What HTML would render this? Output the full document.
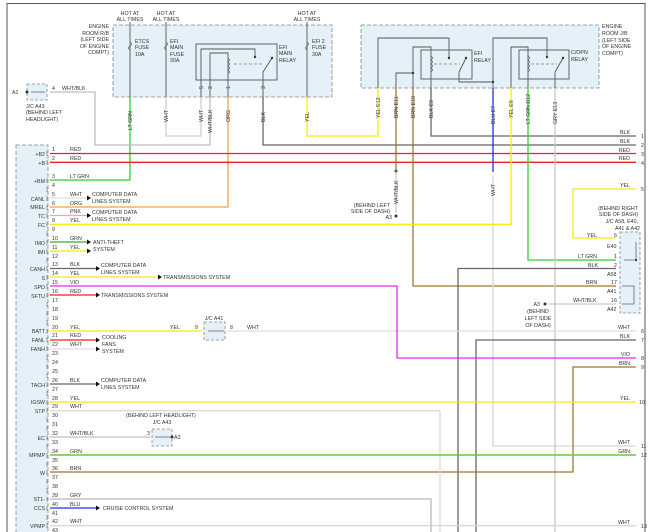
<!DOCTYPE html>
<html><head><meta charset="utf-8"><style>
html,body{margin:0;padding:0;background:#fff}
svg{display:block}
text{font-family:"Liberation Sans",sans-serif;font-size:5.3px;fill:#333}
.w{fill:none;stroke-width:1.3}
</style></head><body>
<svg width="650" height="532" viewBox="0 0 650 532" xmlns="http://www.w3.org/2000/svg">
<rect x="0" y="0" width="650" height="532" fill="#fff"/>
<path d="M7 532 V3.5 H645 V532" fill="none" stroke="#555" stroke-width="1"/>
<rect x="113" y="25" width="219" height="72" fill="#e4f1f8" stroke="#888" stroke-width="0.8" stroke-dasharray="4,2"/>
<rect x="361" y="25" width="238" height="63" fill="#e4f1f8" stroke="#888" stroke-width="0.8" stroke-dasharray="4,2"/>
<rect x="16" y="145" width="32" height="390" fill="#e4f1f8" stroke="#888" stroke-width="0.8" stroke-dasharray="4,2"/>
<rect x="27" y="84" width="20" height="16" fill="#e4f1f8" stroke="#888" stroke-width="0.8" stroke-dasharray="3,2"/>
<rect x="620" y="232" width="20" height="81" fill="#e4f1f8" stroke="#888" stroke-width="0.8" stroke-dasharray="3,2"/>
<rect x="204" y="322" width="21" height="18" fill="#e4f1f8" stroke="#888" stroke-width="0.8" stroke-dasharray="3,2"/>
<rect x="152" y="429" width="20" height="17" fill="#e4f1f8" stroke="#888" stroke-width="0.8" stroke-dasharray="3,2"/>

<g fill="none" stroke="#555" stroke-width="0.9">
<path d="M130 22 V97 M166 22 V97 M307 22 V97"/>
<rect x="196" y="44" width="81" height="36"/>
<path d="M201 97 V49 H255 V57 M210 97 V53 H228 V97"/>
<path d="M263 97 V72 L272 58"/>
<path d="M234 64 H262" stroke="#999" stroke-dasharray="3,2"/>
<path d="M378 88 V38 H449 V58 M396 88 V73 H413 M413 88 V47 H431 V88 M459 72 V82 H493"/>
<rect x="421" y="50" width="51" height="29"/>
<path d="M434 64 H460" stroke="#999" stroke-dasharray="3,2"/>
<path d="M459 72 L466 58"/>
<path d="M493 88 V38 H547 V57 M511 88 V47 H528 V88 M555 88 V72 L563 58"/>
<rect x="519" y="50" width="50" height="29"/>
<path d="M531 64 H557" stroke="#999" stroke-dasharray="3,2"/>
</g>
<g fill="#333"><circle cx="255" cy="57" r="1.2"/><circle cx="272" cy="58" r="1.2"/><circle cx="413" cy="73" r="1.2"/><circle cx="493" cy="82" r="1.2"/><circle cx="449" cy="58" r="1.2"/><circle cx="466" cy="58" r="1.2"/><circle cx="547" cy="57" r="1.2"/><circle cx="563" cy="58" r="1.2"/><circle cx="396" cy="171" r="1.5"/><circle cx="396" cy="216" r="1.5"/><circle cx="545" cy="304" r="1.5"/><circle cx="27" cy="92" r="1.5"/><circle cx="172" cy="437" r="1.5"/><circle cx="636" cy="260" r="1.2"/></g>
<g fill="none" stroke="#555" stroke-width="0.7">
<path d="M228 58 q3 2 0 4 q3 2 0 4 q3 2 0 4 q3 2 0 4"/>
<path d="M431 56 q3 2 0 4 q3 2 0 4 q3 2 0 4 q3 2 0 4"/>
<path d="M528 56 q3 2 0 4 q3 2 0 4 q3 2 0 4 q3 2 0 4"/>
<path d="M130 42 q3 2 0 4 q-3 2 0 4 M166 42 q3 2 0 4 q-3 2 0 4 M307 42 q3 2 0 4 q-3 2 0 4"/>
</g>

<g class="w">
<path d="M130 97 V180 H50" stroke="#2ad42a"/>
<path d="M166 97 V136 H201 V97" stroke="#cfcfcf"/>
<path d="M210 97 V145 H95 V92 H50" stroke="#bdbdbd"/>
<path d="M228 97 V207 H50" stroke="#f5a040"/>
<path d="M263 97 V145 H636" stroke="#666"/>
<path d="M307 97 V136 H378 V88" stroke="#f2ea10"/>
<path d="M431 88 V136 H636" stroke="#666"/>
<path d="M50 153.5 H636 M50 162.3 H636" stroke="#ee2020"/>
<path d="M396 88 V171" stroke="#a0782c"/>
<path d="M396 171 V213" stroke="#aaa" stroke-width="0.8"/>
<path d="M413 88 V286 H616" stroke="#a0782c"/>
<path d="M493 88 V172" stroke="#2030ee"/>
<path d="M493 175 V446 H636" stroke="#d5d5d5"/>
<path d="M511 88 V224.3 H50" stroke="#f2ea10"/>
<path d="M528 88 V260 H616" stroke="#2ad42a"/>
<path d="M555 88 V532" stroke="#c8c8c8"/>
<path d="M636 189 H573 V238 H616" stroke="#f2ea10"/>
<path d="M616 268.5 H458 V532" stroke="#666"/>
<path d="M616 304 H548" stroke="#aaa" stroke-width="0.8"/>
<path d="M50 331 H202" stroke="#f2ea10"/>
<path d="M228 331 H636" stroke="#ddd"/>
<path d="M636 340 H476 V532" stroke="#666"/>
<path d="M50 286 H397 V358 H636" stroke="#f020f0"/>
<path d="M636 367 H573 V472 H50" stroke="#a0782c"/>
<path d="M50 402 H636" stroke="#f2ea10"/>
<path d="M50 410.7 H440 V532" stroke="#d8d8d8"/>
<path d="M50 455 H636" stroke="#66c848" stroke-width="1.6"/>
<path d="M50 525.7 H636" stroke="#d8d8d8"/>
<path d="M50 499 H431 V532" stroke="#bbb"/>
<path d="M50 437 H150" stroke="#999" stroke-width="0.8"/>
<path d="M50 198 H87" stroke="#ddd"/>
<path d="M50 215.5 H87" stroke="#f7a0b0"/>
<path d="M50 242 H87" stroke="#30b030"/>
<path d="M50 251 H87" stroke="#f2ea10"/>
<path d="M50 268.5 H96" stroke="#666"/>
<path d="M50 277 H158" stroke="#f2ea10"/>
<path d="M50 295 H96" stroke="#ee2020"/>
<path d="M50 340 H96" stroke="#ee2020"/>
<path d="M50 349 H96" stroke="#ddd"/>
<path d="M50 384 H96" stroke="#666"/>
<path d="M50 508 H96" stroke="#2030ee"/>
<path d="M208 331 H224 M155 437 H170 M31 92 H45 M624 260 H636 V242 M622 286 H634 V304 H622" stroke="#666" stroke-width="0.8"/>
</g>
<g fill="#111">
<path d="M87 195.5 l4 2.5 l-4 2.5z M87 213 l4 2.5 l-4 2.5z M87 239.5 l4 2.5 l-4 2.5z M87 248.5 l4 2.5 l-4 2.5z M96 266 l4 2.5 l-4 2.5z M158 274.5 l4 2.5 l-4 2.5z M96 292.5 l4 2.5 l-4 2.5z M96 337.5 l4 2.5 l-4 2.5z M96 346.5 l4 2.5 l-4 2.5z M96 381.5 l4 2.5 l-4 2.5z M96 505.5 l4 2.5 l-4 2.5z"/>
</g>

<g text-anchor="middle">
<text x="130" y="15">HOT AT</text><text x="130" y="21">ALL TIMES</text>
<text x="166" y="15">HOT AT</text><text x="166" y="21">ALL TIMES</text>
<text x="307" y="15">HOT AT</text><text x="307" y="21">ALL TIMES</text>
</g>
<g text-anchor="end">
<text x="109" y="28">ENGINE</text><text x="109" y="35">ROOM R/B</text><text x="109" y="41">(LEFT SIDE</text><text x="109" y="48">OF ENGINE</text><text x="109" y="54">COMPT)</text>
</g>
<text x="135" y="43">ETCS</text><text x="135" y="49">FUSE</text><text x="135" y="56">10A</text>
<text x="170" y="43">EFI</text><text x="170" y="49">MAIN</text><text x="170" y="56">FUSE</text><text x="170" y="62">30A</text>
<text x="312" y="43">EFI 2</text><text x="312" y="49">FUSE</text><text x="312" y="56">30A</text>
<text x="279" y="49">EFI</text><text x="279" y="55">MAIN</text><text x="279" y="62">RELAY</text>
<text x="474" y="55">EFI</text><text x="474" y="62">RELAY</text>
<text x="571" y="54">C/OPN</text><text x="571" y="61">RELAY</text>
<text x="602" y="28">ENGINE</text><text x="602" y="35">ROOM J/B</text><text x="602" y="42">(LEFT SIDE</text><text x="602" y="48">OF ENGINE</text><text x="602" y="55">COMPT)</text>
<text x="12" y="94">A1</text><text x="52" y="90">4</text><text x="62" y="90">WHT/BLK</text>
<text x="26" y="108">J/C A43</text><text x="26" y="114">(BEHIND LEFT</text><text x="26" y="121">HEADLIGHT)</text>
<g>
<text transform="translate(132,130) rotate(-90)">LT GRN</text>
<text transform="translate(168,122) rotate(-90)">WHT</text>
<text transform="translate(203,122) rotate(-90)">WHT</text>
<text transform="translate(212,133) rotate(-90)">WHT/BLK</text>
<text transform="translate(230,122) rotate(-90)">ORG</text>
<text transform="translate(265,122) rotate(-90)">BLK</text>
<text transform="translate(309,122) rotate(-90)">YEL</text>
<text transform="translate(380,118) rotate(-90)">YEL  E12</text>
<text transform="translate(398,118) rotate(-90)">BRN  E11</text>
<text transform="translate(415,118) rotate(-90)">BRN  E10</text>
<text transform="translate(433,118) rotate(-90)">BLK  E9</text>
<text transform="translate(495,124) rotate(-90)">BLU    E7</text>
<text transform="translate(513,118) rotate(-90)">YEL  E6</text>
<text transform="translate(530,124) rotate(-90)">LT GRN  D12</text>
<text transform="translate(557,124) rotate(-90)">GRY  E13</text>
<text transform="translate(398,204) rotate(-90)">WHT/BLK</text>
<text transform="translate(495,196) rotate(-90)">WHT</text>
<text transform="translate(203,89) rotate(-90)">5</text><text transform="translate(212,89) rotate(-90)">2</text><text transform="translate(230,89) rotate(-90)">1</text><text transform="translate(265,89) rotate(-90)">3</text>
</g>
<g text-anchor="end">
<text x="390" y="207">(BEHIND LEFT</text><text x="390" y="213">SIDE OF DASH)</text><text x="392" y="219">A3</text>
<text x="638" y="210">(BEHIND RIGHT</text><text x="638" y="216">SIDE OF DASH)</text><text x="638" y="223">J/C A58, E40,</text><text x="640" y="230">A41 &amp; A42</text>
<text x="540" y="306">A3</text>
</g>
<g text-anchor="middle"><text x="538" y="313">(BEHIND</text><text x="538" y="320">LEFT SIDE</text><text x="538" y="327">OF DASH)</text>
<text x="161" y="417">(BEHIND LEFT HEADLIGHT)</text><text x="162" y="424">J/C A43</text><text x="214" y="320">J/C A41</text></g>
<text x="587" y="237">YEL</text><text x="614" y="237">6</text><text x="607" y="248">E40</text>
<text x="578" y="258">LT GRN</text><text x="614" y="258">1</text>
<text x="588" y="267">BLK</text><text x="614" y="267">2</text><text x="607" y="276">A58</text>
<text x="586" y="284">BRN</text><text x="611" y="284">17</text><text x="607" y="293">A41</text>
<text x="573" y="302">WHT/BLK</text><text x="611" y="302">16</text><text x="607" y="311">A42</text>
<text x="195" y="329">9</text><text x="230" y="329">8</text><text x="170" y="329">YEL</text><text x="247" y="329">WHT</text>
<text x="147" y="435">3</text><text x="174" y="439">A3</text>
<g text-anchor="end">
<text x="630" y="134">BLK</text><text x="630" y="143">BLK</text><text x="630" y="152">RED</text><text x="630" y="160">RED</text>
<text x="630" y="187">YEL</text><text x="630" y="329">WHT</text><text x="630" y="338">BLK</text><text x="630" y="356">VIO</text><text x="630" y="365">BRN</text>
<text x="630" y="400">YEL</text><text x="630" y="444">WHT</text><text x="630" y="453">GRN</text><text x="630" y="524">WHT</text>
</g>
<text x="641" y="138">1</text><text x="641" y="147">2</text><text x="641" y="156">3</text><text x="641" y="165">4</text><text x="641" y="191">5</text><text x="641" y="333">6</text><text x="641" y="342">7</text><text x="641" y="360">8</text><text x="641" y="369">9</text><text x="639" y="404">10</text><text x="641" y="448">11</text><text x="641" y="457">12</text><text x="641" y="528">13</text>
<text x="92" y="196">COMPUTER DATA</text><text x="92" y="203">LINES SYSTEM</text>
<text x="92" y="214">COMPUTER DATA</text><text x="92" y="221">LINES SYSTEM</text>
<text x="93" y="244">ANTI-THEFT</text><text x="93" y="251">SYSTEM</text>
<text x="101" y="267">COMPUTER DATA</text><text x="101" y="274">LINES SYSTEM</text>
<text x="163" y="279">TRANSMISSIONS SYSTEM</text>
<text x="101" y="297">TRANSMISSIONS SYSTEM</text>
<text x="102" y="339">COOLING</text><text x="102" y="346">FANS</text><text x="102" y="353">SYSTEM</text>
<text x="101" y="382">COMPUTER DATA</text><text x="101" y="389">LINES SYSTEM</text>
<text x="103" y="510">CRUISE CONTROL SYSTEM</text>
<g text-anchor="end">
<text x="45" y="156">+B2</text><text x="45" y="165">+B</text><text x="45" y="183">+BM</text><text x="45" y="201">CANL</text><text x="45" y="209">MREL</text><text x="45" y="218">TC</text><text x="45" y="227">FC</text><text x="45" y="245">IMO</text><text x="45" y="254">IMI</text><text x="45" y="271">CANH</text><text x="45" y="280">S</text><text x="45" y="289">SPD</text><text x="45" y="298">SFTU</text><text x="45" y="333">BATT</text><text x="45" y="342">FANL</text><text x="45" y="351">FANH</text><text x="45" y="387">TACH</text><text x="45" y="404">IGSW</text><text x="45" y="413">STP</text><text x="45" y="440">EC</text><text x="45" y="457">MPMP</text><text x="45" y="475">W</text><text x="45" y="501">ST1-</text><text x="45" y="510">CCS</text><text x="45" y="528">VPMP</text>
</g>
<g>
<text x="52" y="151">1</text><text x="52" y="160">2</text><text x="52" y="178">3</text><text x="52" y="187">4</text><text x="52" y="196">5</text><text x="52" y="205">6</text><text x="52" y="213">7</text><text x="52" y="222">8</text><text x="52" y="231">9</text><text x="52" y="240">10</text><text x="52" y="249">11</text><text x="52" y="258">12</text><text x="52" y="266">13</text><text x="52" y="275">14</text><text x="52" y="284">15</text><text x="52" y="293">16</text><text x="52" y="302">17</text><text x="52" y="311">18</text><text x="52" y="320">19</text><text x="52" y="329">20</text><text x="52" y="337">21</text><text x="52" y="346">22</text><text x="52" y="355">23</text><text x="52" y="364">24</text><text x="52" y="373">25</text><text x="52" y="382">26</text><text x="52" y="391">27</text><text x="52" y="400">28</text><text x="52" y="408">29</text><text x="52" y="417">30</text><text x="52" y="426">31</text><text x="52" y="435">32</text><text x="52" y="444">33</text><text x="52" y="453">34</text><text x="52" y="462">35</text><text x="52" y="470">36</text><text x="52" y="479">37</text><text x="52" y="488">38</text><text x="52" y="497">39</text><text x="52" y="506">40</text><text x="52" y="515">41</text><text x="52" y="523">42</text><text x="52" y="532">43</text>
</g>
<g fill="none" stroke="#666" stroke-width="0.6">
<path d="M47 151 v5 M47 160 v5 M47 178 v5 M47 187 v5 M47 196 v5 M47 205 v5 M47 213 v5 M47 222 v5 M47 231 v5 M47 240 v5 M47 249 v5 M47 258 v5 M47 266 v5 M47 275 v5 M47 284 v5 M47 293 v5 M47 302 v5 M47 311 v5 M47 320 v5 M47 329 v5 M47 337 v5 M47 346 v5 M47 355 v5 M47 364 v5 M47 373 v5 M47 382 v5 M47 391 v5 M47 400 v5 M47 408 v5 M47 417 v5 M47 426 v5 M47 435 v5 M47 444 v5 M47 453 v5 M47 462 v5 M47 470 v5 M47 479 v5 M47 488 v5 M47 497 v5 M47 506 v5 M47 515 v5 M47 523 v5"/>
</g>
<g>
<text x="70" y="151">RED</text><text x="70" y="160">RED</text><text x="70" y="178">LT GRN</text><text x="70" y="196">WHT</text><text x="70" y="205">ORG</text><text x="70" y="213">PNK</text><text x="70" y="222">YEL</text><text x="70" y="240">GRN</text><text x="70" y="249">YEL</text><text x="70" y="266">BLK</text><text x="70" y="275">YEL</text><text x="70" y="284">VIO</text><text x="70" y="293">RED</text><text x="70" y="329">YEL</text><text x="70" y="337">RED</text><text x="70" y="346">WHT</text><text x="70" y="382">BLK</text><text x="70" y="400">YEL</text><text x="70" y="408">WHT</text><text x="70" y="435">WHT/BLK</text><text x="70" y="453">GRN</text><text x="70" y="470">BRN</text><text x="70" y="497">GRY</text><text x="70" y="506">BLU</text><text x="70" y="523">WHT</text>
</g>
</svg>
</body></html>
